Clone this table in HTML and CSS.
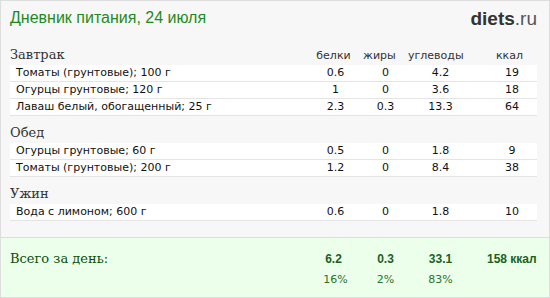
FILE: index.html
```html
<!DOCTYPE html>
<html lang="ru">
<head>
<meta charset="utf-8">
<title>Дневник питания</title>
<link rel="stylesheet" href="styles.css">
</head>
<body>
<div class="page">
  <div class="main">
    <div class="top">
      <div class="title">Дневник питания, 24 июля</div>
      <div class="logo"><b>diets</b>.ru</div>
    </div>

    <div class="grid head">
      <div class="sec">Завтрак</div>
      <div class="lbl l1">белки</div>
      <div class="lbl l2">жиры</div>
      <div class="lbl l3">углеводы</div>
      <div class="lbl l4">ккал</div>
    </div>
    <div class="grid row"><div class="name">Томаты (грунтовые); 100 г</div><div class="n">0.6</div><div class="n">0</div><div class="n">4.2</div><div class="n k">19</div></div>
    <div class="grid row"><div class="name">Огурцы грунтовые; 120 г</div><div class="n">1</div><div class="n">0</div><div class="n">3.6</div><div class="n k">18</div></div>
    <div class="grid row"><div class="name">Лаваш белый, обогащенный; 25 г</div><div class="n">2.3</div><div class="n">0.3</div><div class="n">13.3</div><div class="n k">64</div></div>

    <div class="grid head"><div class="sec">Обед</div></div>
    <div class="grid row"><div class="name">Огурцы грунтовые; 60 г</div><div class="n">0.5</div><div class="n">0</div><div class="n">1.8</div><div class="n k">9</div></div>
    <div class="grid row"><div class="name">Томаты (грунтовые); 200 г</div><div class="n">1.2</div><div class="n">0</div><div class="n">8.4</div><div class="n k">38</div></div>

    <div class="grid head"><div class="sec">Ужин</div></div>
    <div class="grid row"><div class="name">Вода с лимоном; 600 г</div><div class="n">0.6</div><div class="n">0</div><div class="n">1.8</div><div class="n k">10</div></div>
  </div>

  <div class="total grid">
    <div class="tlabel">Всего за день:</div>
    <div class="tv t1">6.2</div>
    <div class="tv">0.3</div>
    <div class="tv">33.1</div>
    <div class="tv tk">158 ккал</div>
    <div></div>
    <div class="pc">16%</div>
    <div class="pc">2%</div>
    <div class="pc">83%</div>
    <div></div>
  </div>
</div>
</body>
</html>
```

FILE: styles.css
```css
html, body {
  margin: 0;
  padding: 0;
  background: #ffffff;
}

.page {
  width: 550px;
  height: 298px;
  box-sizing: border-box;
  border: 1px solid #dddddd;
  background: #f7f7f7;
  display: flex;
  flex-direction: column;
}

.main {
  padding: 0 12px 16px 9px;
}

.top {
  height: 37px;
  box-sizing: border-box;
  padding-top: 6px;
  display: flex;
  justify-content: space-between;
  align-items: baseline;
}

.title {
  font-family: "Liberation Sans", Arial, sans-serif;
  font-size: 16px;
  line-height: 20px;
  color: #1f8a1f;
}

.logo {
  font-family: "Liberation Sans", Arial, sans-serif;
  font-size: 19px;
  line-height: 20px;
  color: #555555;
  margin-right: 0;
  position: relative;
  top: 2px;
}

.logo b {
  color: #333333;
  font-weight: bold;
}

.grid {
  display: grid;
  grid-template-columns: 1fr 55px 45px 65px 64px;
}

.head {
  height: 27px;
  box-sizing: border-box;
  padding-top: 8px;
  align-items: baseline;
}

.sec {
  font-family: "DejaVu Serif", Georgia, serif;
  font-size: 13px;
  line-height: 17px;
  color: #333333;
}

.lbl {
  font-family: "DejaVu Sans", Verdana, sans-serif;
  font-size: 11px;
  line-height: 16px;
  color: #333333;
  text-align: center;
}

.l1 { padding-right: 4px; }
.l2 { padding-right: 15px; }
.l3 { padding-right: 11px; }
.l4 { padding-left: 9px; }

.row {
  height: 17px;
  box-sizing: border-box;
  background: #ffffff;
  border-bottom: 1px solid #e4e4e4;
  font-family: "DejaVu Sans", Verdana, sans-serif;
  font-size: 11px;
  line-height: 16px;
  color: #111111;
}

.name {
  padding-left: 6px;
  white-space: nowrap;
}

.n {
  text-align: center;
}

.n.k {
  padding-left: 14px;
}

.total {
  flex: 1;
  border-top: 1px solid #dddddd;
  background: #ebffeb;
  padding: 11px 12px 0 9px;
  align-content: start;
  row-gap: 1px;
  align-items: baseline;
}

.tlabel {
  font-family: "DejaVu Serif", Georgia, serif;
  font-size: 13px;
  line-height: 20px;
  color: #0c4f0c;
}

.tv {
  font-family: "Liberation Sans", Arial, sans-serif;
  font-weight: bold;
  font-size: 12px;
  line-height: 20px;
  color: #1d5f1d;
  text-align: center;
}

.t1 { padding-right: 4px; }

.tk {
  padding-left: 14px;
  padding-right: 8px;
  white-space: nowrap;
}

.pc {
  font-family: "DejaVu Sans", Verdana, sans-serif;
  font-size: 11px;
  line-height: 20px;
  color: #2e722e;
  text-align: center;
}
```
